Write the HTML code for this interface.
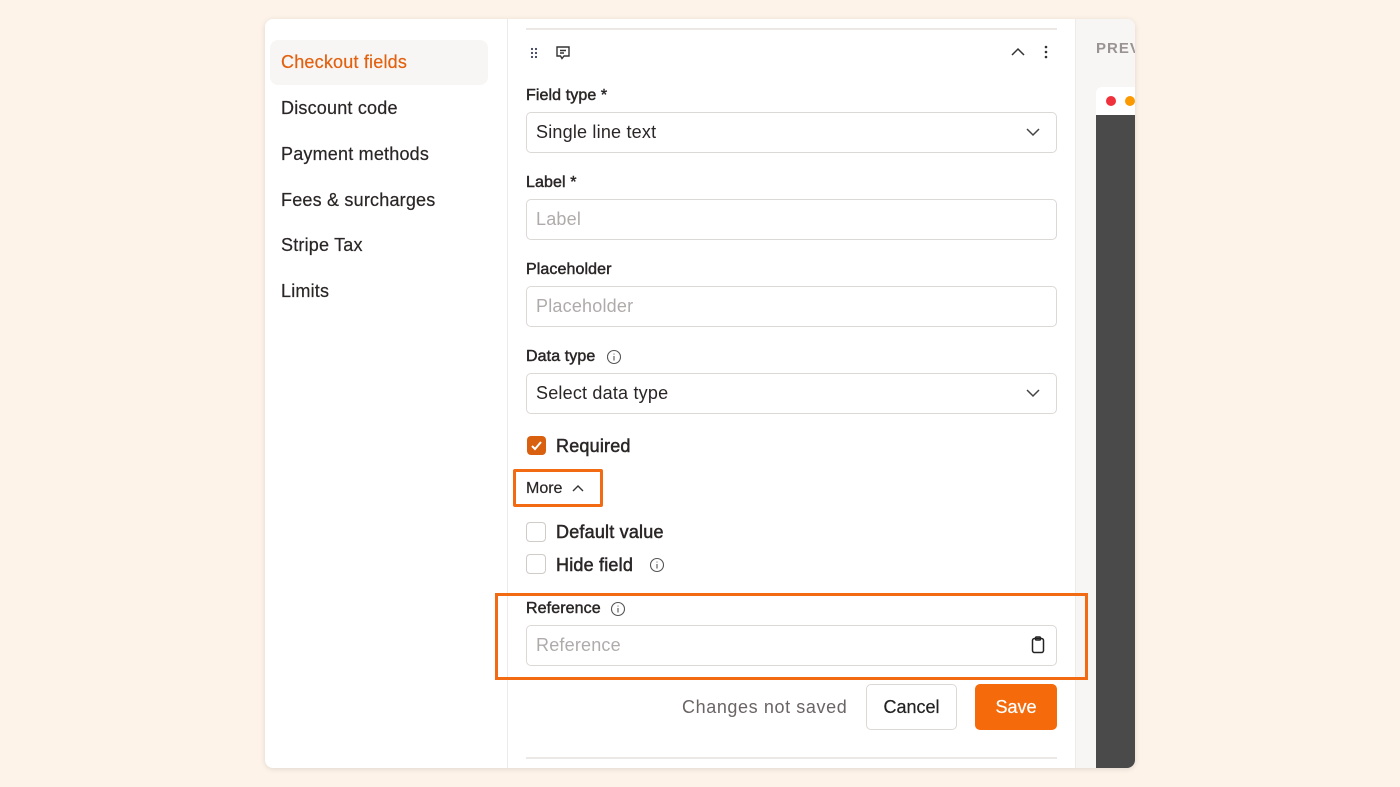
<!DOCTYPE html>
<html><head><meta charset="utf-8"><style>
*{box-sizing:border-box;margin:0;padding:0}
body{width:1400px;height:787px;background:#fdf3e9;font-family:"Liberation Sans",sans-serif;position:relative;overflow:hidden;color:#222}
.card{position:absolute;left:265px;top:19px;width:870px;height:749px;background:#fff;border-radius:8px;box-shadow:0 1px 6px rgba(0,0,0,.12);overflow:hidden}
.nav{position:absolute;left:0;top:0;width:243px;height:100%;border-right:1px solid #eeeae6}
.ni{position:absolute;left:16px;font-size:18px;color:#2b2626;line-height:22px;letter-spacing:.2px;-webkit-text-stroke:.2px #2b2626}
.act{position:absolute;left:5px;top:21px;width:218px;height:45px;background:#f8f6f4;border-radius:8px}
.abs{position:absolute}
.lbl{position:absolute;left:261px;font-size:16px;color:#2b2626;line-height:20px;-webkit-text-stroke:.45px #2b2626;letter-spacing:.1px}
.inp{position:absolute;left:261px;width:531px;height:41px;border:1px solid #dcd8d5;border-radius:5px;font-size:18px;line-height:39px;padding-left:9px;color:#b0abab;letter-spacing:.2px}
.sel{color:#2b2626}
.prev{position:absolute;left:810px;top:0;width:60px;height:100%;background:#f7f6f4;border-left:1px solid #eeeae6}
.cb{position:absolute;left:261px;width:20px;height:20px;border:1.5px solid #cfcbc8;border-radius:4px}
.cbt{position:absolute;left:291px;font-size:18px;color:#2b2626;line-height:22px;-webkit-text-stroke:.5px #2b2626;letter-spacing:.2px}
</style></head><body>
<div class="card">
 <div class="prev">
  <div class="abs" style="left:20px;top:21px;font-size:15px;font-weight:bold;color:#9a9393;letter-spacing:1px">PREVIEW</div>
  <div class="abs" style="left:20px;top:68px;width:60px;height:700px;background:#fff;border-radius:6px 0 0 0"></div>
  <div class="abs" style="left:30px;top:77px;width:10px;height:10px;border-radius:50%;background:#f0303a"></div>
  <div class="abs" style="left:49px;top:77px;width:10px;height:10px;border-radius:50%;background:#fa9a00"></div>
  <div class="abs" style="left:20px;top:96px;width:60px;height:660px;background:#4a4a4a"></div>
 </div>
 <div class="nav">
  <div class="act"></div>
  <div class="ni" style="top:32px;color:#e2600f;-webkit-text-stroke:.2px #e2600f">Checkout fields</div>
  <div class="ni" style="top:78px">Discount code</div>
  <div class="ni" style="top:124px">Payment methods</div>
  <div class="ni" style="top:170px">Fees &amp; surcharges</div>
  <div class="ni" style="top:215px">Stripe Tax</div>
  <div class="ni" style="top:261px">Limits</div>
 </div>
 <div class="abs" style="left:261px;top:9px;width:531px;height:2px;background:#ece8e6"></div>
 <svg class="abs" style="left:264px;top:27px" width="10" height="14" viewBox="0 0 10 14"><g fill="#3b3f5c"><circle cx="3" cy="3" r="1.1"/><circle cx="7" cy="3" r="1.1"/><circle cx="3" cy="7" r="1.1"/><circle cx="7" cy="7" r="1.1"/><circle cx="3" cy="11" r="1.1"/><circle cx="7" cy="11" r="1.1"/></g></svg>
 <svg class="abs" style="left:289px;top:25px" width="18" height="18" viewBox="0 0 18 18" fill="none" stroke="#333" stroke-width="1.4"><path d="M3 3h12v9H10l-2 2.5L6.5 12H3z"/><path d="M6 6.5h6M6 9h4"/></svg>
 <svg class="abs" style="left:745px;top:27px" width="16" height="12" viewBox="0 0 16 12" fill="none" stroke="#333" stroke-width="1.5"><path d="M2 9l6-6 6 6"/></svg>
 <svg class="abs" style="left:778px;top:25px" width="6" height="16"><g fill="#333"><circle cx="3" cy="3" r="1.3"/><circle cx="3" cy="8" r="1.3"/><circle cx="3" cy="13" r="1.3"/></g></svg>

 <div class="lbl" style="top:67px">Field type *</div>
 <div class="inp sel" style="top:93px">Single line text</div>
 <svg class="abs" style="left:760px;top:107px" width="16" height="12" viewBox="0 0 16 12" fill="none" stroke="#444" stroke-width="1.5"><path d="M2 3l6 6 6-6"/></svg>
 <div class="lbl" style="top:154px">Label *</div>
 <div class="inp" style="top:180px">Label</div>
 <div class="lbl" style="top:241px">Placeholder</div>
 <div class="inp" style="top:267px">Placeholder</div>
 <div class="lbl" style="top:328px">Data type</div>
 <svg class="abs" style="left:341px;top:330px" width="16" height="16" viewBox="0 0 16 16" fill="none" stroke="#555" stroke-width="1.1"><circle cx="8" cy="8" r="6.5"/><path d="M8 7v4.5M8 4.6v.9"/></svg>
 <div class="inp sel" style="top:354px">Select data type</div>
 <svg class="abs" style="left:760px;top:368px" width="16" height="12" viewBox="0 0 16 12" fill="none" stroke="#444" stroke-width="1.5"><path d="M2 3l6 6 6-6"/></svg>

 <div class="abs" style="left:262px;top:417px;width:19px;height:19px;background:#d9600f;border-radius:4px"></div>
 <svg class="abs" style="left:262px;top:417px" width="19" height="19" viewBox="0 0 19 19" fill="none" stroke="#fff" stroke-width="2"><path d="M5 10l3 3 6-7"/></svg>
 <div class="cbt" style="top:416px">Required</div>

 <div class="abs" style="left:248px;top:450px;width:90px;height:38px;border:3px solid #f26b12;border-radius:2px"></div>
 <div class="abs" style="left:261px;top:460px;font-size:16px;color:#2b2626;line-height:20px;-webkit-text-stroke:.2px #2b2626">More</div>
 <svg class="abs" style="left:306px;top:464px" width="14" height="10" viewBox="0 0 14 10" fill="none" stroke="#333" stroke-width="1.4"><path d="M2 8l5-5 5 5"/></svg>

 <div class="cb" style="top:503px"></div><div class="cbt" style="top:502px">Default value</div>
 <div class="cb" style="top:535px"></div><div class="cbt" style="top:535px">Hide field</div>
 <svg class="abs" style="left:384px;top:538px" width="16" height="16" viewBox="0 0 16 16" fill="none" stroke="#555" stroke-width="1.1"><circle cx="8" cy="8" r="6.5"/><path d="M8 7v4.5M8 4.6v.9"/></svg>

 <div class="abs" style="left:230px;top:574px;width:593px;height:87px;border:3px solid #f26b12"></div>
 <div class="lbl" style="top:580px">Reference</div>
 <svg class="abs" style="left:345px;top:582px" width="16" height="16" viewBox="0 0 16 16" fill="none" stroke="#555" stroke-width="1.1"><circle cx="8" cy="8" r="6.5"/><path d="M8 7v4.5M8 4.6v.9"/></svg>
 <div class="inp" style="top:606px">Reference</div>
 <svg class="abs" style="left:765px;top:616px" width="16" height="20" viewBox="0 0 16 20" fill="none" stroke="#222" stroke-width="1.5"><rect x="2.5" y="3.5" width="11" height="14" rx="2"/><rect x="5.5" y="2" width="5" height="3" rx="1"/></svg>

 <div class="abs" style="left:417px;top:677px;font-size:18px;color:#6b6464;line-height:22px;letter-spacing:.6px">Changes not saved</div>
 <div class="abs" style="left:601px;top:665px;width:91px;height:46px;border:1px solid #dcd8d5;border-radius:5px;font-size:18px;line-height:44px;text-align:center;color:#222;-webkit-text-stroke:.2px #222">Cancel</div>
 <div class="abs" style="left:710px;top:665px;width:82px;height:46px;background:#f56a0a;border-radius:5px;font-size:18px;line-height:46px;text-align:center;color:#fff;-webkit-text-stroke:.2px #fff">Save</div>
 <div class="abs" style="left:261px;top:738px;width:531px;height:2px;background:#ece8e6"></div>
</div>
</body></html>
